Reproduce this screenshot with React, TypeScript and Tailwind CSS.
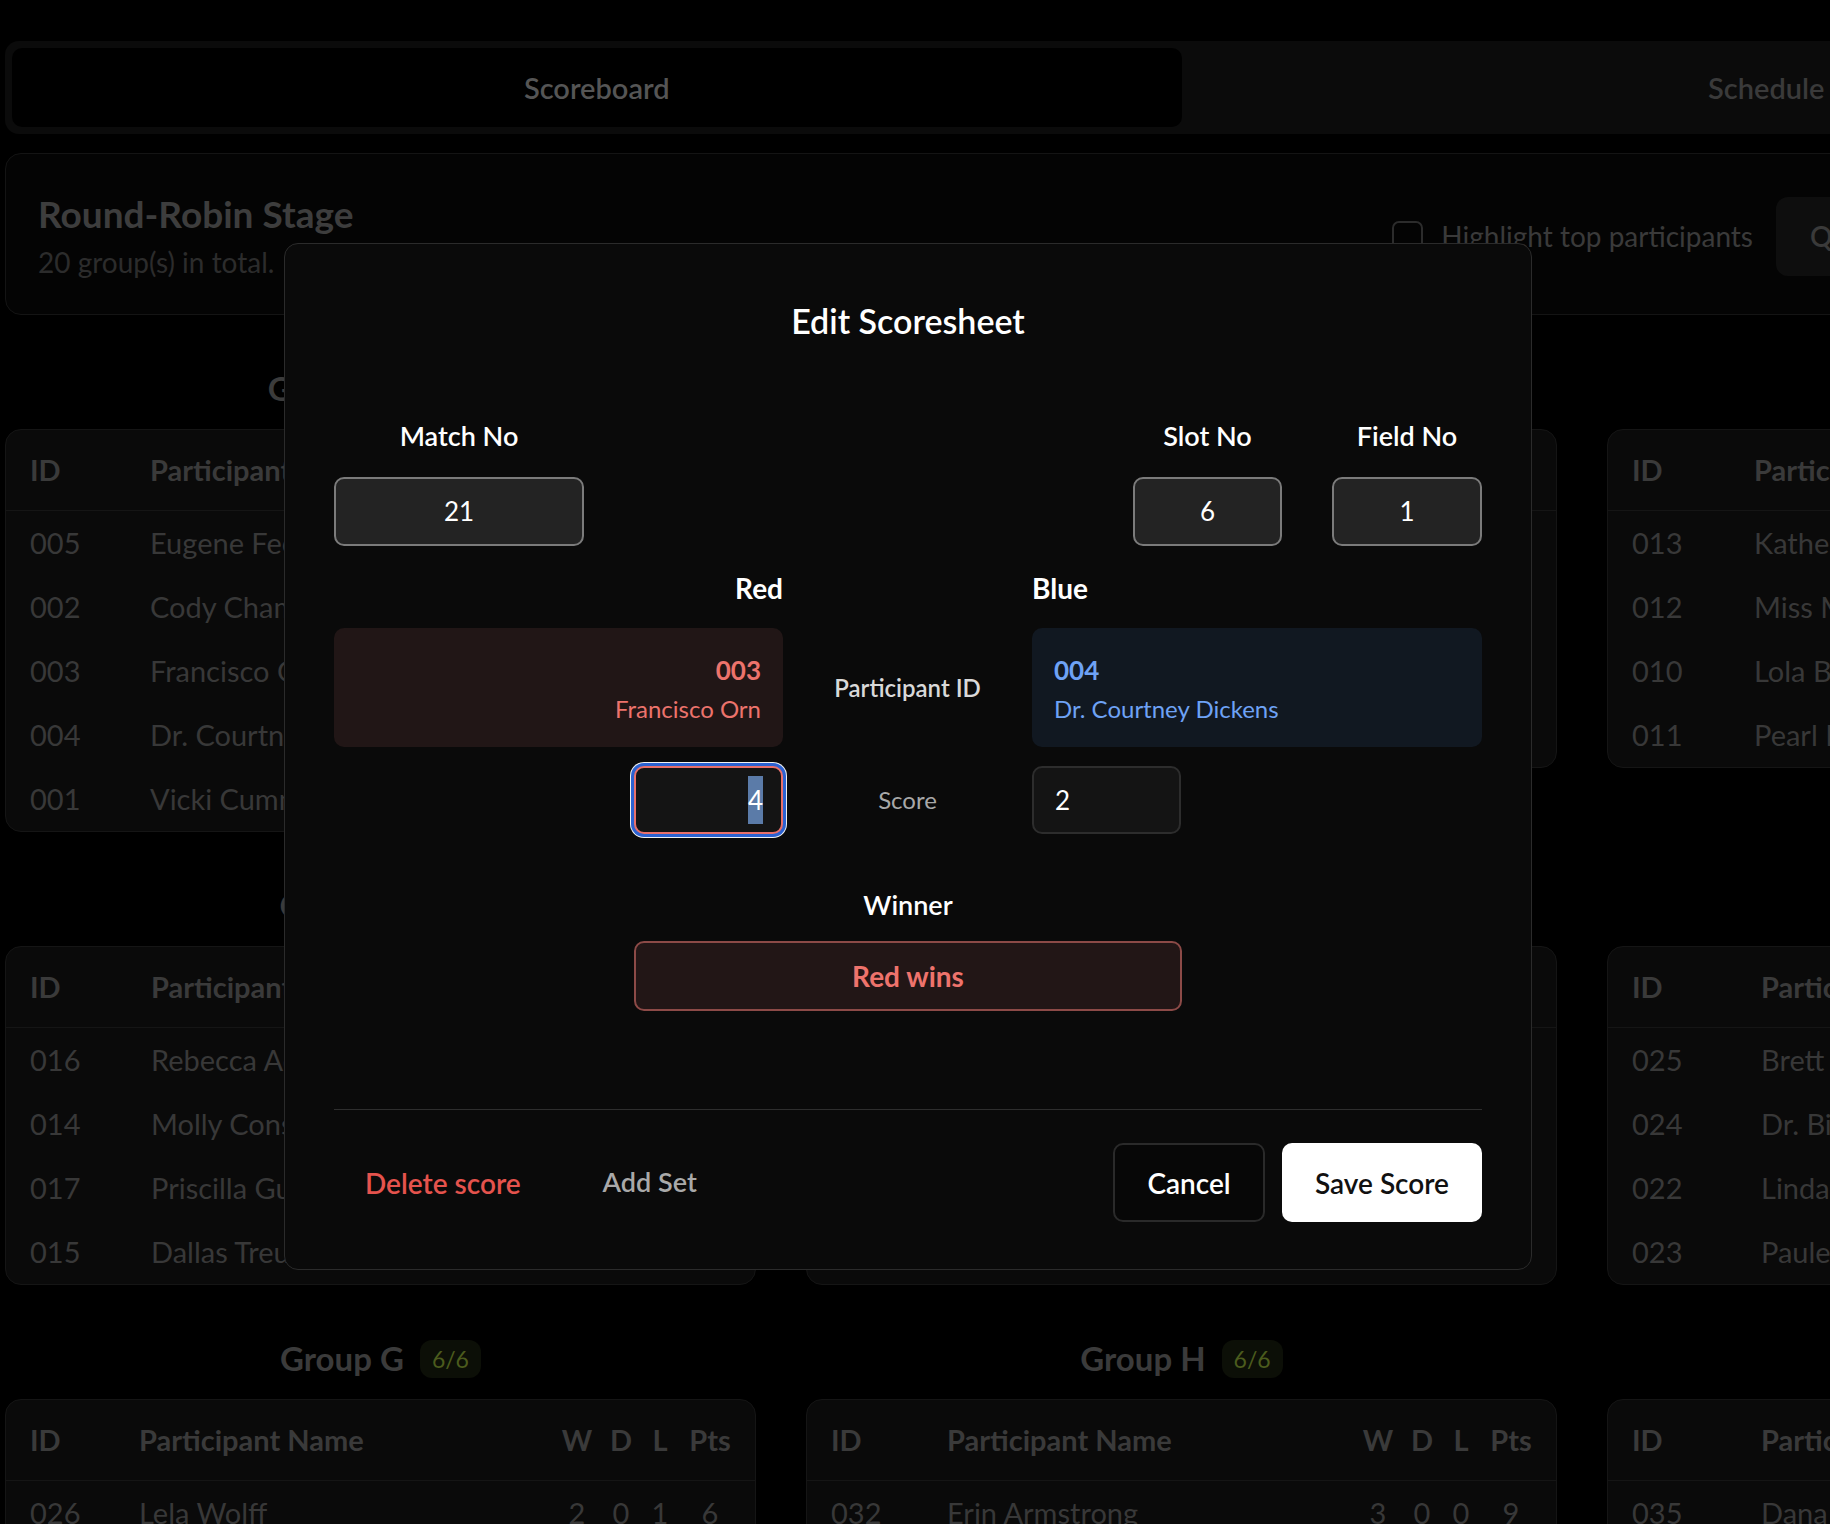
import React from "react";

type Row = { id: string; name: string; w: number; d: number; l: number; pts: number };
type Group = { name: string; done: string; idw: string; rows: Row[] };

const groups: Group[] = [
  {
    name: "Group A",
    done: "10/10",
    idw: "w-[144px]",
    rows: [
      { id: "005", name: "Eugene Feeney", w: 3, d: 1, l: 0, pts: 10 },
      { id: "002", name: "Cody Champlin", w: 2, d: 1, l: 1, pts: 7 },
      { id: "003", name: "Francisco Orn", w: 2, d: 0, l: 2, pts: 6 },
      { id: "004", name: "Dr. Courtney Dickens", w: 1, d: 1, l: 2, pts: 4 },
      { id: "001", name: "Vicki Cummerata", w: 0, d: 1, l: 3, pts: 1 },
    ],
  },
  {
    name: "Group B",
    done: "6/6",
    idw: "w-[144px]",
    rows: [
      { id: "008", name: "Jana Kuhn", w: 3, d: 0, l: 0, pts: 9 },
      { id: "006", name: "Ernest Lowe", w: 2, d: 0, l: 1, pts: 6 },
      { id: "009", name: "Marion Hegmann", w: 1, d: 0, l: 2, pts: 3 },
      { id: "007", name: "Tommy Ratke", w: 0, d: 0, l: 3, pts: 0 },
    ],
  },
  {
    name: "Group C",
    done: "6/6",
    idw: "w-[146px]",
    rows: [
      { id: "013", name: "Katherine Bode", w: 2, d: 1, l: 0, pts: 7 },
      { id: "012", name: "Miss Marian Runte", w: 2, d: 0, l: 1, pts: 6 },
      { id: "010", name: "Lola Bergnaum", w: 1, d: 1, l: 1, pts: 4 },
      { id: "011", name: "Pearl Fritsch", w: 0, d: 0, l: 3, pts: 0 },
    ],
  },
  {
    name: "Group D",
    done: "6/6",
    idw: "w-[145px]",
    rows: [
      { id: "016", name: "Rebecca Adams", w: 3, d: 0, l: 0, pts: 9 },
      { id: "014", name: "Molly Considine", w: 2, d: 0, l: 1, pts: 6 },
      { id: "017", name: "Priscilla Gusikowski", w: 1, d: 0, l: 2, pts: 3 },
      { id: "015", name: "Dallas Treutel", w: 0, d: 0, l: 3, pts: 0 },
    ],
  },
  {
    name: "Group E",
    done: "6/6",
    idw: "w-[145px]",
    rows: [
      { id: "019", name: "Gerald Wunsch", w: 2, d: 1, l: 0, pts: 7 },
      { id: "021", name: "Sheryl Bins", w: 2, d: 0, l: 1, pts: 6 },
      { id: "018", name: "Roland Sporer", w: 1, d: 0, l: 2, pts: 3 },
      { id: "020", name: "Alice Kling", w: 0, d: 1, l: 2, pts: 1 },
    ],
  },
  {
    name: "Group F",
    done: "6/6",
    idw: "w-[153px]",
    rows: [
      { id: "025", name: "Brett Jacobs", w: 3, d: 0, l: 0, pts: 9 },
      { id: "024", name: "Dr. Bill Hahn", w: 2, d: 0, l: 1, pts: 6 },
      { id: "022", name: "Linda Wiza", w: 1, d: 0, l: 2, pts: 3 },
      { id: "023", name: "Paulette Moen", w: 0, d: 0, l: 3, pts: 0 },
    ],
  },
  {
    name: "Group G",
    done: "6/6",
    idw: "w-[133px]",
    rows: [
      { id: "026", name: "Lela Wolff", w: 2, d: 0, l: 1, pts: 6 },
      { id: "028", name: "Owen Grady", w: 2, d: 0, l: 1, pts: 6 },
    ],
  },
  {
    name: "Group H",
    done: "6/6",
    idw: "w-[140px]",
    rows: [
      { id: "032", name: "Erin Armstrong", w: 3, d: 0, l: 0, pts: 9 },
      { id: "030", name: "Hugh Parker", w: 2, d: 0, l: 1, pts: 6 },
    ],
  },
  {
    name: "Group I",
    done: "6/6",
    idw: "w-[153px]",
    rows: [
      { id: "035", name: "Dana Schultz", w: 3, d: 0, l: 0, pts: 9 },
      { id: "034", name: "Kent Mayer", w: 1, d: 1, l: 1, pts: 4 },
    ],
  },
];

const GroupTable = ({ group }: { group: Group }) => (
  <div className="flex flex-col">
    <div className="mb-[16px] flex h-[48px] items-center justify-center gap-[16px]">
      <span className="text-[33px] font-bold text-[#3b3b3b]">{group.name}</span>
      <span className="rounded-[12px] bg-[#0c0f07] px-[12px] py-[2px] text-[23px] text-[#4b5b1d]">{group.done}</span>
    </div>
    <div className="overflow-hidden rounded-[16px] border border-[#151515] bg-[#0a0a0a]">
      <div className="flex h-[81px] items-center border-b border-[#151515] pr-[14px] text-[29px] font-bold text-[#3a3a3a]">
        <div className={`${group.idw} shrink-0 pl-[24px]`}>ID</div>
        <div className="flex-1 whitespace-nowrap">Participant Name</div>
        <div className="w-[48px] text-center">W</div>
        <div className="w-[40px] text-center">D</div>
        <div className="w-[38px] text-center">L</div>
        <div className="w-[62px] text-center">Pts</div>
      </div>
      {group.rows.map((r) => (
        <div key={r.id} className="flex h-[64px] items-center pr-[14px] text-[29px] text-[#383838]">
          <div className={`${group.idw} shrink-0 pl-[24px]`}>{r.id}</div>
          <div className="flex-1 whitespace-nowrap">{r.name}</div>
          <div className="w-[48px] text-center">{r.w}</div>
          <div className="w-[40px] text-center">{r.d}</div>
          <div className="w-[38px] text-center">{r.l}</div>
          <div className="w-[62px] text-center">{r.pts}</div>
        </div>
      ))}
    </div>
  </div>
);

const NumberField = ({ label, value, width }: { label: string; value: string; width: string }) => (
  <div className="flex flex-col items-center">
    <div className="text-[27px] font-semibold leading-[32px] text-white">{label}</div>
    <div
      className={`${width} mt-[25px] flex h-[69px] items-center justify-center rounded-[10px] border-2 border-[#7b7b7b] bg-[#232323] text-[26px] text-white`}
    >
      {value}
    </div>
  </div>
);

export default function App() {
  return (
    <div
      className="relative min-h-screen overflow-hidden bg-black"
      style={{ fontFamily: "Lato, 'Noto Sans', sans-serif" }}
    >
      <div className="w-[2358px] pl-[5px] pt-[41px]">
        {/* tabs */}
        <div className="flex h-[93px] rounded-[14px] bg-[#0b0b0b] p-[7px]">
          <div className="flex flex-1 items-center justify-center rounded-[10px] bg-black text-[29px] font-semibold text-[#555555]">
            Scoreboard
          </div>
          <div className="flex flex-1 items-center justify-center text-[29px] font-semibold text-[#3a3a3a]">
            Schedule
          </div>
        </div>

        {/* stage header */}
        <div className="mt-[19px] flex h-[162px] items-center rounded-[16px] border border-[#141414] bg-[#040404] pl-[32px] pr-[28px] pt-[4px]">
          <div className="flex-1">
            <div className="text-[37px] font-bold leading-[44px] text-[#3d3d3d]">Round-Robin Stage</div>
            <div className="mt-[8px] text-[28px] leading-[36px] text-[#2c2c2c]">20 group(s) in total.</div>
          </div>
          <div className="flex items-center">
            <div className="h-[31px] w-[31px] rounded-[7px] border-2 border-[#2c2c2c]" />
            <span className="ml-[18px] text-[28px] text-[#3a3a3a]">Highlight top participants</span>
            <div className="ml-[23px] flex h-[79px] w-[300px] items-center rounded-[12px] bg-[#0e0e0e] pl-[34px] text-[28px] font-semibold text-[#3a3a3a]">
              Qualify Participants
            </div>
            <div className="ml-[16px] flex h-[79px] w-[237px] items-center justify-center rounded-[12px] bg-[#0e0e0e] text-[28px] font-semibold text-[#3a3a3a]">
              Knockout
            </div>
          </div>
        </div>

        {/* groups */}
        <div className="mt-[50px] grid grid-cols-3 items-start gap-x-[50px] gap-y-[50px]">
          {groups.map((g) => (
            <GroupTable key={g.name} group={g} />
          ))}
        </div>
      </div>

      {/* dialog */}
      <div className="absolute left-[284px] top-[243px] w-[1248px] rounded-[14px] border border-[#2b2b2b] bg-[#0a0a0a] px-[49px] pb-[47px] pt-[57px] text-white">
        <h2 className="text-center text-[34px] font-semibold leading-[40px]">Edit Scoresheet</h2>

        <div className="mt-[79px] flex items-end">
          <NumberField label="Match No" value="21" width="w-[250px]" />
          <div className="ml-auto flex gap-[50px]">
            <NumberField label="Slot No" value="6" width="w-[149px]" />
            <NumberField label="Field No" value="1" width="w-[150px]" />
          </div>
        </div>

        <div className="mt-[26px] grid grid-cols-[449px_1fr_450px]">
          <div className="text-right text-[28px] font-bold leading-[32px]">Red</div>
          <div />
          <div className="text-[28px] font-bold leading-[32px]">Blue</div>

          <div className="mt-[24px] h-[119px] rounded-[10px] bg-[#211616] px-[22px] pt-[26px] text-right text-[#ec736c]">
            <div className="text-[26px] font-bold leading-[32px]">003</div>
            <div className="mt-[7px] text-[24px] leading-[32px]">Francisco Orn</div>
          </div>
          <div className="mt-[24px] flex items-center justify-center text-[24px] font-semibold text-[#d9d9d9]">
            Participant ID
          </div>
          <div className="mt-[24px] h-[119px] rounded-[10px] bg-[#111821] px-[22px] pt-[26px] text-[#6ea2f5]">
            <div className="text-[26px] font-bold leading-[32px]">004</div>
            <div className="mt-[7px] text-[24px] leading-[32px]">Dr. Courtney Dickens</div>
          </div>

          <div className="mt-[19px] flex justify-end">
            <div className="flex h-[68px] w-[149px] items-center justify-end rounded-[10px] border-2 border-[#e8706b] bg-[#141414] px-[18px] shadow-[0_0_0_3px_#2c62d1,0_0_0_4px_#f2f2f2]">
              <span className="bg-[#5b7ba8] text-[26px] leading-[48px] text-white">4</span>
            </div>
          </div>
          <div className="mt-[19px] flex items-center justify-center text-[24px] text-[#a8a8a8]">Score</div>
          <div className="mt-[19px]">
            <div className="flex h-[68px] w-[149px] items-center rounded-[10px] border-2 border-[#2d2d2d] bg-[#141414] px-[21px] text-[26px] text-white">
              2
            </div>
          </div>
        </div>

        <div className="mt-[55px] text-center text-[27px] font-semibold leading-[32px]">Winner</div>
        <div className="mx-auto mt-[20px] flex h-[70px] w-[548px] items-center justify-center rounded-[10px] border-2 border-[#8c4a47] bg-[#221616] text-[28px] font-bold text-[#ee736c]">
          Red wins
        </div>

        <div className="mt-[98px] h-px bg-[#2e2e2e]" />

        <div className="mt-[33px] flex items-center">
          <div className="flex gap-[20px]">
            <div className="flex h-[79px] items-center px-[31px] text-[28px] font-semibold text-[#e5534d]">Delete score</div>
            <div className="flex h-[79px] items-center px-[31px] text-[27px] font-semibold text-[#a9a9a9]">Add Set</div>
          </div>
          <div className="ml-auto flex gap-[17px]">
            <div className="flex h-[79px] w-[152px] items-center justify-center rounded-[10px] border-2 border-[#2a2a2a] bg-[#070707] text-[28px] font-semibold text-white">
              Cancel
            </div>
            <div className="flex h-[79px] w-[200px] items-center justify-center rounded-[10px] bg-white text-[28px] font-semibold text-[#111111]">
              Save Score
            </div>
          </div>
        </div>
      </div>
    </div>
  );
}
